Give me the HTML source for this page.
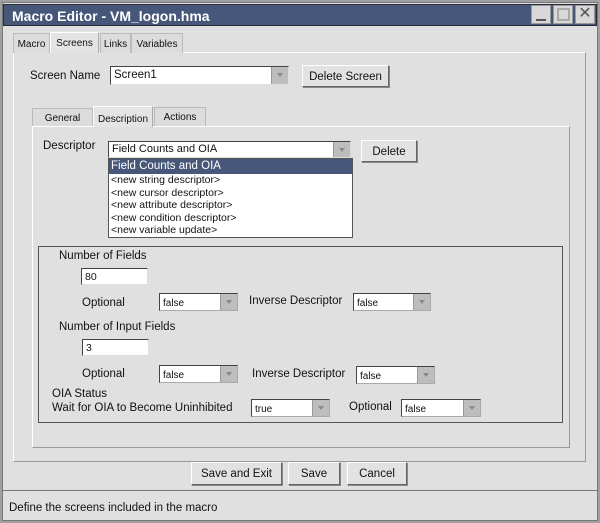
<!DOCTYPE html>
<html><head><style>
*{box-sizing:border-box;margin:0;padding:0}
body{width:600px;height:523px;background:#a0a0a0;font-family:"Liberation Sans",sans-serif;font-size:11px;color:#111;position:relative;overflow:hidden}
.a{position:absolute}
.win{left:2px;top:2px;width:596px;height:519px;background:#e0e0e0;border:1px solid #777}
.title{left:3px;top:4px;width:594px;height:22px;background:#47577a;border:1px solid #2a2a3a;color:#fff;font-weight:bold;font-size:14px;padding:3px 0 0 8px}
.tb{top:5px;width:20px;height:19px;background:#d8d8d8;border:1px solid #999}
.tab{height:20px;border:1px solid #bbb;border-bottom:none;background:#dcdcdc;font-size:10px;text-align:center;padding-top:5px}
.tab.sel{background:#e4e4e4;border-color:#fff #aaa #fff #fff}
.panel{border:1px solid;border-color:#fff #999 #999 #fff}
.inp{background:#fff;border:1px solid;border-color:#444 #ddd #ddd #444;font-size:11px;padding:2px 0 0 3px}
.sel2{background:#fff;border:1px solid;border-color:#444 #aaa #aaa #444;font-size:10px;padding:4px 0 0 3px}
.arr{position:absolute;right:0;top:0;bottom:0;width:17px;background:#bdbdbd;border-left:1px solid #999}
.arr:after{content:"";position:absolute;left:5px;top:6px;border:3px solid transparent;border-top:4px solid #888}
.btn{background:#e2e2e2;border:1px solid;border-color:#fff #666 #666 #fff;box-shadow:1px 1px 0 #888;text-align:center;font-size:11.5px;padding-top:5px}
.lbl{font-size:11.5px}
</style></head><body>
<div class="a win"></div>
<div class="a title">Macro Editor - VM_logon.hma</div>
<div class="a tb" style="left:531px"><div class="a" style="left:4px;top:13px;width:10px;height:2px;background:#555"></div></div>
<div class="a tb" style="left:553px"><div class="a" style="left:3px;top:2px;width:13px;height:13px;border:2px solid #aaa"></div></div>
<div class="a tb" style="left:575px;font-size:16px;color:#555;text-align:center;line-height:16px">✕</div>

<div class="a panel" style="left:13px;top:52px;width:573px;height:410px"></div>
<div class="a tab" style="left:13px;top:33px;width:37px">Macro</div>
<div class="a tab sel" style="left:50px;top:32px;width:49px;height:21px">Screens</div>
<div class="a tab" style="left:100px;top:33px;width:31px">Links</div>
<div class="a tab" style="left:131px;top:33px;width:52px">Variables</div>

<div class="a lbl" style="left:30px;top:70px">Screen Name</div>
<div class="a inp" style="left:110px;top:66px;width:179px;height:19px;font-size:11.5px">Screen1<div class="arr"></div></div>
<div class="a btn" style="left:302px;top:65px;width:87px;height:22px">Delete Screen</div>

<div class="a panel" style="left:32px;top:126px;width:538px;height:322px"></div>
<div class="a tab" style="left:32px;top:108px;width:61px;height:18px;padding-top:4px">General</div>
<div class="a tab sel" style="left:93px;top:106px;width:60px;height:21px;padding-top:7px">Description</div>
<div class="a tab" style="left:154px;top:107px;width:52px;height:19px;padding-top:4px">Actions</div>

<div class="a lbl" style="left:43px;top:140px">Descriptor</div>
<div class="a inp" style="left:108px;top:141px;width:243px;height:17px;padding-top:1px">Field Counts and OIA<div class="arr"></div></div>
<div class="a btn" style="left:361px;top:140px;width:56px;height:22px">Delete</div>
<div class="a" style="left:108px;top:158px;width:245px;height:80px;background:#fff;border:1px solid #555;font-size:10.5px;line-height:12.5px">
<div style="background:#47577a;color:#fff;padding-left:2px;font-size:11.5px;height:15px;line-height:15px">Field Counts and OIA</div>
<div style="padding-left:2px">&lt;new string descriptor&gt;<br>&lt;new cursor descriptor&gt;<br>&lt;new attribute descriptor&gt;<br>&lt;new condition descriptor&gt;<br>&lt;new variable update&gt;</div></div>

<div class="a" style="left:38px;top:246px;width:525px;height:177px;border:1px solid #555"></div>
<div class="a lbl" style="left:59px;top:250px">Number of Fields</div>
<div class="a inp" style="left:81px;top:268px;width:67px;height:17px;font-size:10.5px">80</div>
<div class="a lbl" style="left:82px;top:297px">Optional</div>
<div class="a sel2" style="left:159px;top:293px;width:79px;height:18px">false<div class="arr"></div></div>
<div class="a lbl" style="left:249px;top:295px">Inverse Descriptor</div>
<div class="a sel2" style="left:353px;top:293px;width:78px;height:18px">false<div class="arr"></div></div>

<div class="a lbl" style="left:59px;top:321px">Number of Input Fields</div>
<div class="a inp" style="left:82px;top:339px;width:67px;height:17px;font-size:10.5px">3</div>
<div class="a lbl" style="left:82px;top:368px">Optional</div>
<div class="a sel2" style="left:159px;top:365px;width:79px;height:18px">false<div class="arr"></div></div>
<div class="a lbl" style="left:252px;top:368px">Inverse Descriptor</div>
<div class="a sel2" style="left:356px;top:366px;width:79px;height:18px">false<div class="arr"></div></div>

<div class="a lbl" style="left:52px;top:388px">OIA Status</div>
<div class="a lbl" style="left:52px;top:402px">Wait for OIA to Become Uninhibited</div>
<div class="a sel2" style="left:251px;top:399px;width:79px;height:18px">true<div class="arr"></div></div>
<div class="a lbl" style="left:349px;top:401px">Optional</div>
<div class="a sel2" style="left:401px;top:399px;width:80px;height:18px">false<div class="arr"></div></div>

<div class="a btn" style="left:191px;top:462px;width:91px;height:23px">Save and Exit</div>
<div class="a btn" style="left:288px;top:462px;width:52px;height:23px">Save</div>
<div class="a btn" style="left:347px;top:462px;width:60px;height:23px">Cancel</div>

<div class="a" style="left:3px;top:490px;width:594px;height:30px;border-top:1px solid #777;background:#e0e0e0;font-size:11.5px;padding:11px 0 0 6px">Define the screens included in the macro</div>
</body></html>
